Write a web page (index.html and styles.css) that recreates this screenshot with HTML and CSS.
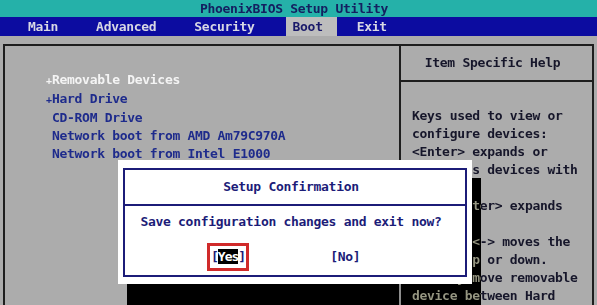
FILE: index.html
```html
<!DOCTYPE html>
<html lang="en">
<head>
  <meta charset="UTF-8" />
  <meta name="viewport" content="width=device-width, initial-scale=1.0"/>
  <title>PhoenixBIOS Setup Utility</title>
  <link rel="stylesheet" href="styles.css">
</head>
<body>
  <div class="screen">
    <div class="title">PhoenixBIOS Setup Utility</div>
    <div class="menu">
      <span class="tab">Main</span>
      <span class="tab">Advanced</span>
      <span class="tab">Security</span>
      <span class="tab active">Boot</span>
      <span class="tab">Exit</span>
    </div>

    <div class="main">
      <div class="frame">
        <div class="list">
          <div class="item selected"><span class="mark">+</span>Removable Devices</div>
          <div class="item"><span class="mark">+</span>Hard Drive</div>
          <div class="item">CD-ROM Drive</div>
          <div class="item">Network boot from AMD Am79C970A</div>
          <div class="item">Network boot from Intel E1000</div>
        </div>
        <div class="help">
          <div class="help-head">Item Specific Help</div>
          <div class="help-body">
            <div>Keys used to view or</div>
            <div>configure devices:</div>
            <div>&lt;Enter&gt; expands or</div>
            <div>collapses devices with</div>
            <div>a + or -</div>
            <div>&lt;Ctrl+Enter&gt; expands</div>
            <div>all</div>
            <div>&lt;+&gt; and &lt;-&gt; moves the</div>
            <div>device up or down.</div>
            <div>&lt;n&gt; May move removable</div>
            <div>device between Hard</div>
          </div>
        </div>
      </div>
    </div>

    <!-- dialog shadow darkens what lies under it -->
    <div class="dialog-shadow"></div>
    <div class="dialog">
      <div class="dialog-box">
        <div class="dialog-head">Setup Confirmation</div>
        <div class="dialog-body">
          <div class="question">Save configuration changes and exit now?</div>
          <div class="choices">
            <span class="choice yes">[<span class="hl">Yes</span>]</span>
            <span class="choice">[No]</span>
          </div>
        </div>
      </div>
    </div>
  </div>
</body>
</html>
```

FILE: styles.css
```css
body {
  margin: 0;
  background: #acacac;
  font-family: "DejaVu Sans Mono", "Liberation Mono", monospace;
  font-weight: bold;
  font-size: 13px;
  letter-spacing: -0.3px;
}

.screen {
  position: relative;
  width: 597px;
  height: 305px;
  overflow: hidden;
  background: #acacac;
}

.title {
  height: 17px;
  line-height: 17px;
  background: #25b1a9;
  color: #142060;
  text-align: center;
  padding-right: 9px;
}

.menu {
  display: flex;
  gap: 16px;
  height: 19px;
  line-height: 19px;
  padding-left: 17px;
  background: #0c0ca0;
  color: #d8d8e4;
}

.tab {
  padding: 0 11px;
}

.tab.active {
  background: #bdbdbd;
  color: #1a1a6a;
  margin-left: 4px;
  padding: 0 14px 0 7px;
}

.tab.active + .tab {
  margin-left: -7px;
}

.main {
  padding: 8px 3px 0 3px;
}

.frame {
  display: grid;
  grid-template-columns: 396px 1fr;
  height: 300px;
  border: 2px solid #1e1e1e;
}

.list {
  padding: 25px 0 0 47px;
  border-right: 2px solid #1e1e1e;
  color: #1e2b8c;
}

.item {
  line-height: 18px;
  white-space: nowrap;
}

.item.selected {
  color: #f4f4f4;
}

.mark {
  display: inline-block;
  width: 6px;
  margin-left: -6px;
  font-size: 10px;
}

.help {
  color: #16162a;
}

.help-head {
  height: 34px;
  line-height: 34px;
  text-align: center;
  padding-right: 8px;
  border-bottom: 2px solid #1e1e1e;
}

.help-body {
  padding: 25px 0 0 11px;
  line-height: 18px;
  white-space: nowrap;
}

.dialog-shadow {
  position: absolute;
  left: 127px;
  top: 178px;
  width: 354px;
  height: 140px;
  background: #acacac;
  mix-blend-mode: difference;
}

.dialog {
  position: absolute;
  left: 118px;
  top: 160px;
  width: 344px;
  padding: 8px 5px 7px 5px;
  background: #ffffff;
  color: #1c1c78;
}

.dialog-box {
  border: 2px solid #1c1c78;
}

.dialog-head {
  height: 34px;
  line-height: 34px;
  text-align: center;
  padding-right: 8px;
  border-bottom: 2px solid #1c1c78;
}

.dialog-body {
  padding: 7px 0 4px 0;
}

.question {
  line-height: 18px;
  text-align: center;
  padding-right: 8px;
}

.choices {
  display: flex;
  align-items: center;
  margin-top: 12px;
  height: 28px;
  padding-left: 82px;
}

.choice {
  line-height: 18px;
}

.choice.yes {
  letter-spacing: -1px;
  padding: 2px 1px;
  border: 3px solid #d02a2a;
  margin-right: 81px;
}

.hl {
  background: #000000;
  color: #ffffff;
}
```
